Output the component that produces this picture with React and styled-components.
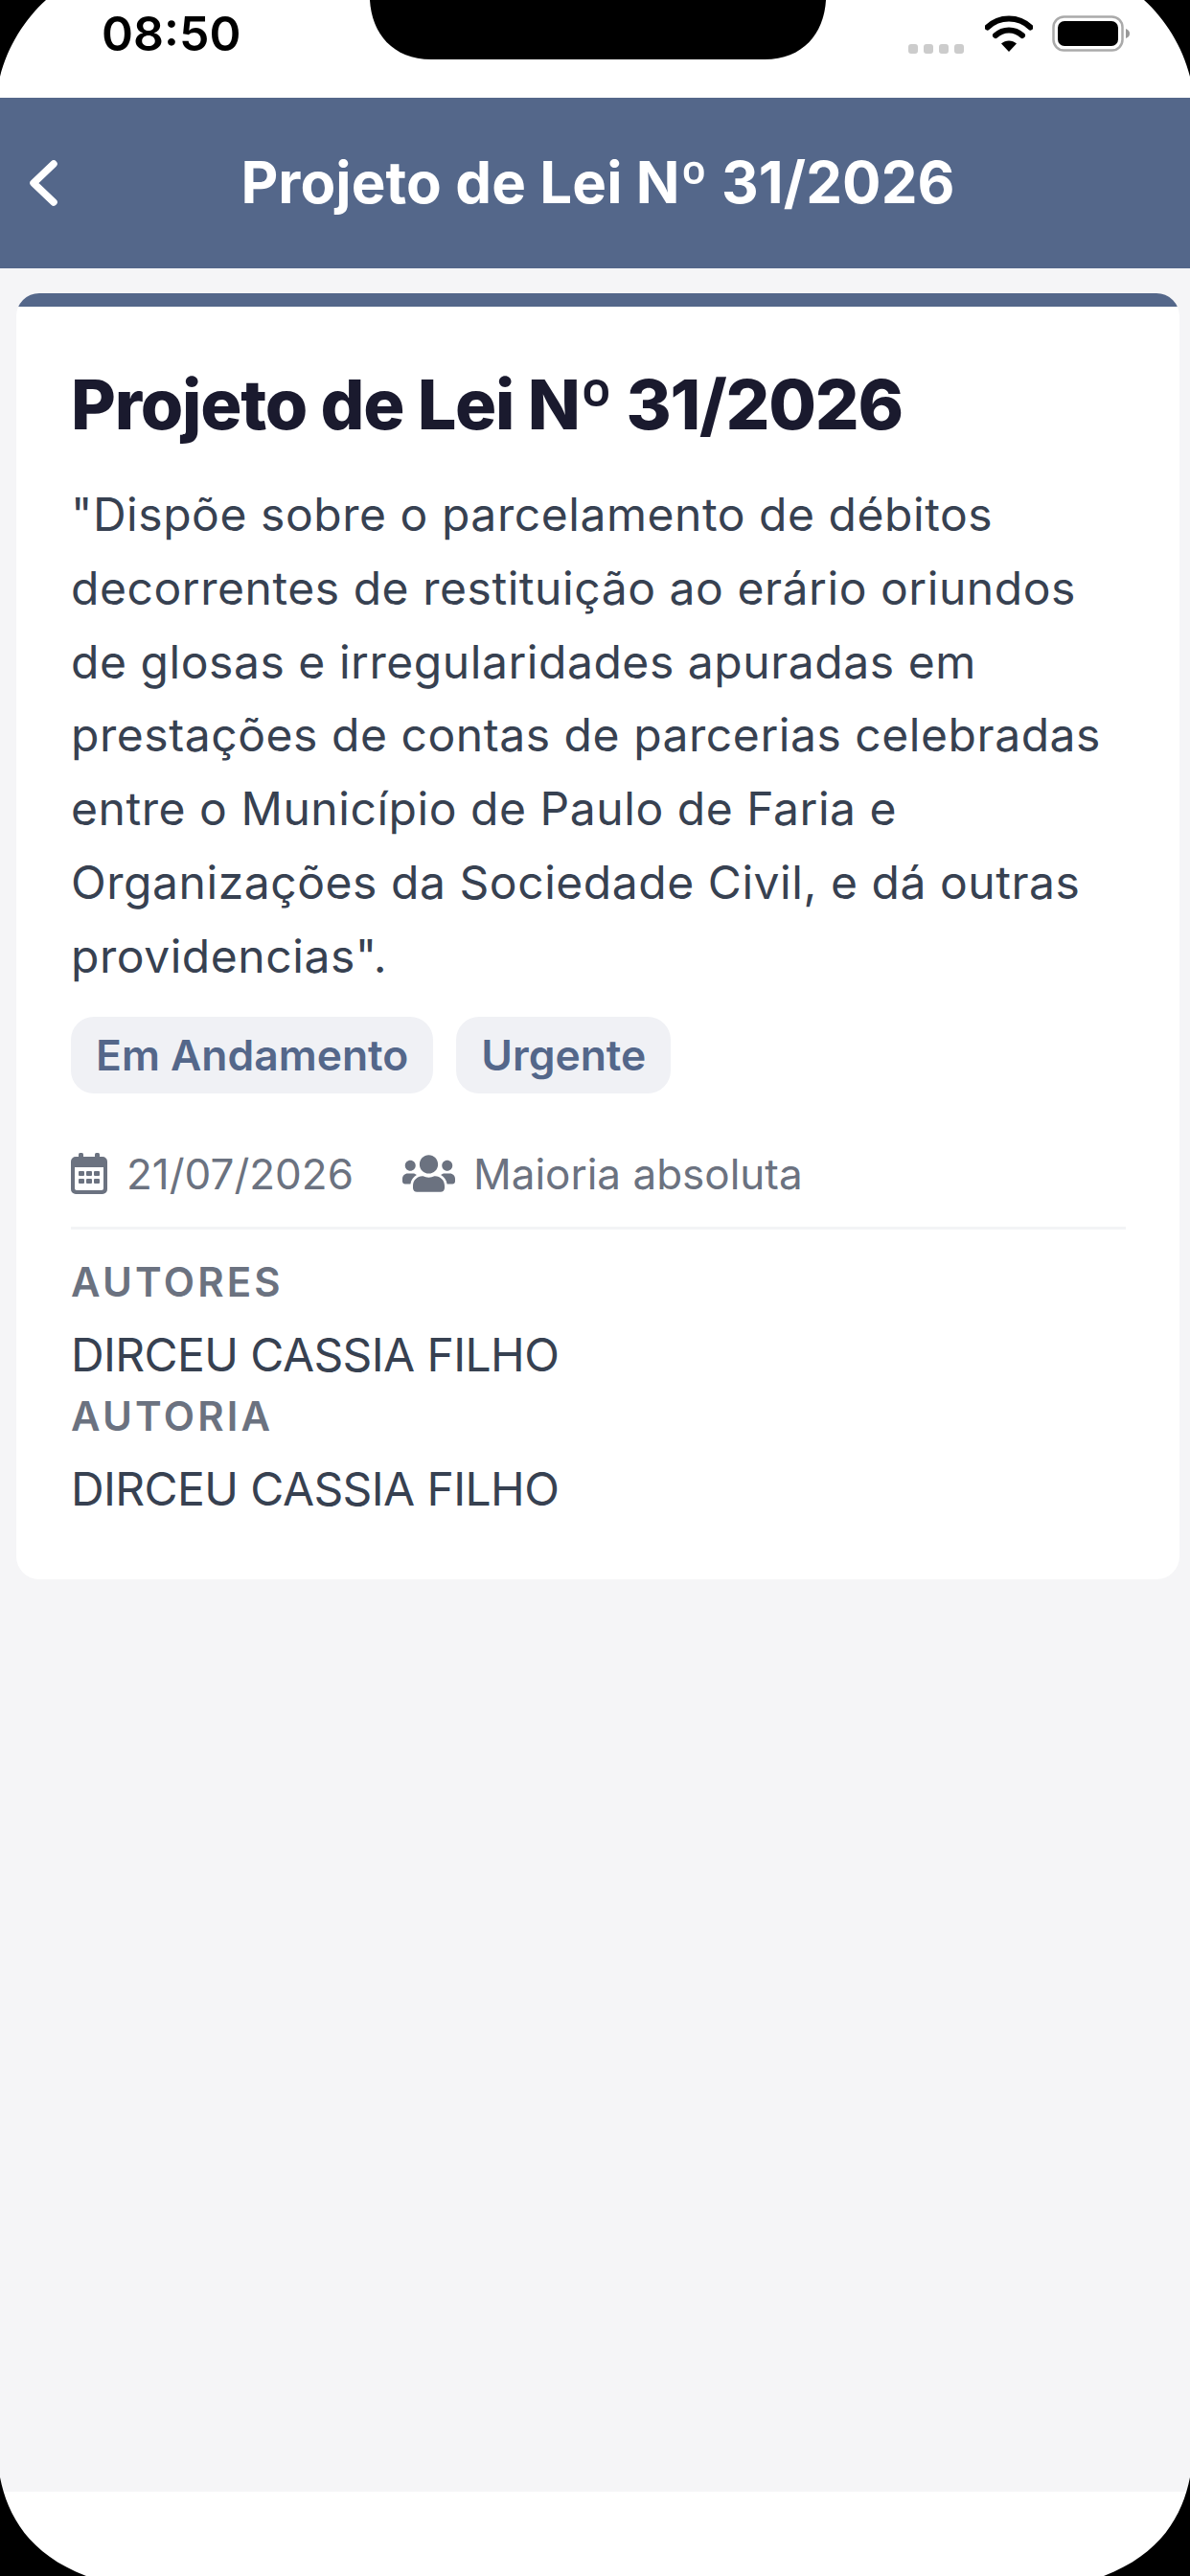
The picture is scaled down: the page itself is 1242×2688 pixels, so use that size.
import React from "react";
import styled, { createGlobalStyle } from "styled-components";
import { FaUsers } from "react-icons/fa";

const Global = createGlobalStyle`
  html, body { margin: 0; padding: 0; background: #000; }
  * { box-sizing: border-box; }
`;

const Screen = styled.div`
  position: relative;
  width: 1242px;
  height: 2688px;
  display: flex;
  flex-direction: column;
  overflow: hidden;
  background: #f5f5f7;
  font-family: Inter, "Noto Sans", sans-serif;
`;

const StatusBar = styled.div`
  height: 102px;
  flex: none;
  background: #fff;
  display: flex;
  align-items: flex-start;
  justify-content: space-between;
  padding: 8px 62px 0 106px;
`;

const Clock = styled.div`
  font-size: 50px;
  line-height: 54px;
  font-weight: 600;
  color: #000;
`;

const StatusIcons = styled.div`
  display: flex;
  align-items: flex-start;
  gap: 20px;
  padding-top: 8px;
`;

const Header = styled.header`
  height: 178px;
  flex: none;
  background: #54678a;
  display: grid;
  grid-template-columns: 1fr auto 1fr;
  align-items: center;
  padding: 0 24px 0 30px;
  color: #fff;
`;

const HeaderTitle = styled.h1`
  margin: -2px 0 0;
  font-size: 60px;
  line-height: 72px;
  font-weight: 700;
  letter-spacing: 0.1px;
`;

const Content = styled.main`
  flex: 1;
  min-height: 0;
  padding: 26px 11px 0 17px;
`;

const Card = styled.section`
  background: #fff;
  border-radius: 24px;
  overflow: hidden;
`;

const CardBand = styled.div`
  height: 14px;
  background: #54678a;
`;

const CardBody = styled.div`
  padding: 54px 56px 56px 57px;
`;

const Title = styled.h2`
  margin: 0 0 29px;
  font-size: 72px;
  line-height: 96px;
  font-weight: 800;
  letter-spacing: -1.25px;
  color: #1a1a2e;
`;

const Description = styled.p`
  margin: 0 0 24px;
  font-size: 48px;
  line-height: 76.8px;
  font-weight: 400;
  letter-spacing: 0.55px;
  color: #374151;
`;

const Tags = styled.div`
  display: flex;
  gap: 24px;
  margin-bottom: 56px;
`;

const Tag = styled.span`
  height: 80px;
  padding: 0 26px;
  border-radius: 24px;
  background: #f0f1f5;
  color: #54678a;
  font-size: 44.4px;
  font-weight: 600;
  line-height: 80px;
`;

const Meta = styled.div`
  display: flex;
  align-items: center;
  gap: 51px;
  padding-bottom: 27px;
  border-bottom: 3px solid #f3f4f6;
  margin-bottom: 29px;
`;

const MetaItem = styled.span`
  display: flex;
  align-items: center;
  gap: ${(p) => p.$gap}px;
  font-size: 44px;
  line-height: 56px;
  color: #6b7280;
  svg { flex: none; }
`;

const Label = styled.div`
  font-size: 42px;
  line-height: 52px;
  font-weight: 600;
  letter-spacing: 3.2px;
  color: #6b7280;
  margin-bottom: 16px;
`;

const Value = styled.div`
  font-size: 48px;
  line-height: 68px;
  letter-spacing: -0.6px;
  color: #374151;
  margin-bottom: 4px;
`;

const BottomBar = styled.div`
  height: 88px;
  flex: none;
  background: #fff;
`;

const Mask = styled.svg`
  position: absolute;
  left: 0;
  top: 0;
  pointer-events: none;
`;

const Wifi = () => (
  <svg width="50" height="40" viewBox="0 0 50 40" fill="none" stroke="#000" strokeLinecap="round">
    <path d="M2.5 12.5C15 0.5 35 0.5 47.5 12.5" strokeWidth="6" />
    <path d="M11 21C19 13.5 31 13.5 39 21" strokeWidth="6" />
    <path d="M17 29.5C21.5 25.5 28.5 25.5 33 29.5L25 38Z" fill="#000" stroke="none" />
  </svg>
);

const SignalDots = () => (
  <svg width="60" height="12" viewBox="0 0 60 12" fill="#ccc" style={{ marginTop: 29 }}>
    <rect x="0" y="1" width="10" height="10" rx="3" />
    <rect x="16" y="1" width="10" height="10" rx="3" />
    <rect x="32" y="1" width="10" height="10" rx="3" />
    <rect x="48" y="1" width="10" height="10" rx="3" />
  </svg>
);

const Battery = () => (
  <svg width="82" height="38" viewBox="0 0 82 38" fill="none">
    <rect x="1.5" y="1.5" width="72" height="35" rx="11" stroke="#aaa" strokeWidth="2.5" />
    <rect x="6" y="6" width="63" height="26" rx="7" fill="#000" />
    <path d="M77 14C80 15 81 17 81 19C81 21 80 23 77 24Z" fill="#999" />
  </svg>
);

const Back = () => (
  <svg width="34" height="50" viewBox="0 0 34 50" fill="none" stroke="#fff" strokeWidth="7.5" strokeLinecap="round" strokeLinejoin="round">
    <path d="M26 5L5 25L26 45" />
  </svg>
);

const CalendarIcon = () => (
  <svg width="38" height="43" viewBox="0 0 38 43" fill="#6b7280">
    <rect x="8" y="0" width="5" height="8" rx="1.5" />
    <rect x="25" y="0" width="5" height="8" rx="1.5" />
    <path
      fillRule="evenodd"
      d="M5 4H33A5 5 0 0 1 38 9V38A5 5 0 0 1 33 43H5A5 5 0 0 1 0 38V9A5 5 0 0 1 5 4ZM4 15V37A2 2 0 0 0 6 39H32A2 2 0 0 0 34 37V15Z"
    />
    <rect x="8" y="19" width="6" height="5" rx="1" />
    <rect x="16" y="19" width="6" height="5" rx="1" />
    <rect x="24" y="19" width="6" height="5" rx="1" />
    <rect x="8" y="27" width="6" height="5" rx="1" />
    <rect x="16" y="27" width="6" height="5" rx="1" />
    <rect x="24" y="27" width="6" height="5" rx="1" />
  </svg>
);

export default function App() {
  return (
    <>
      <Global />
      <Screen>
        <StatusBar>
          <Clock>08:50</Clock>
          <StatusIcons>
            <SignalDots />
            <Wifi />
            <Battery />
          </StatusIcons>
        </StatusBar>
        <Header>
          <Back />
          <HeaderTitle>Projeto de Lei Nº 31/2026</HeaderTitle>
        </Header>
        <Content>
          <Card>
            <CardBand />
            <CardBody>
              <Title>Projeto de Lei Nº 31/2026</Title>
              <Description>
                "Dispõe sobre o parcelamento de débitos decorrentes de restituição ao erário oriundos de glosas e irregularidades apuradas em prestações de contas de parcerias celebradas entre o Município de Paulo de Faria e Organizações da Sociedade Civil, e dá outras providencias".
              </Description>
              <Tags>
                <Tag>Em Andamento</Tag>
                <Tag>Urgente</Tag>
              </Tags>
              <Meta>
                <MetaItem $gap={20}>
                  <CalendarIcon />
                  21/07/2026
                </MetaItem>
                <MetaItem $gap={19}>
                  <FaUsers size={55} />
                  Maioria absoluta
                </MetaItem>
              </Meta>
              <Label>AUTORES</Label>
              <Value>DIRCEU CASSIA FILHO</Value>
              <Label>AUTORIA</Label>
              <Value>DIRCEU CASSIA FILHO</Value>
            </CardBody>
          </Card>
        </Content>
        <BottomBar />
        <Mask width="1242" height="2688" viewBox="0 0 1242 2688" fill="#000">
          <path d="M0 0H48C26 20 8 48 0 80Z" />
          <path d="M1242 0H1194C1216 20 1234 48 1242 80Z" />
          <path d="M0 2585C8 2625 30 2665 90 2688H0Z" />
          <path d="M1242 2585C1234 2625 1212 2665 1152 2688H1242Z" />
          <path d="M386 0C388 35 410 62 450 62H798C838 62 860 35 862 0Z" />
        </Mask>
      </Screen>
    </>
  );
}
